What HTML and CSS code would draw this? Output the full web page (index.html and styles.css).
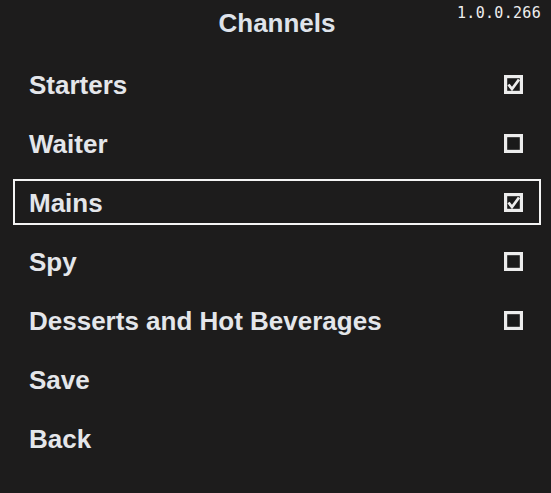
FILE: index.html
```html
<!DOCTYPE html>
<html lang="en">
<head>
    <meta charset="UTF-8">
    <title>Channels</title>
    <link rel="stylesheet" href="styles.css">
</head>
<body>
<div class="screen">
    <div class="header">
        <span></span>
        <h1>Channels</h1>
        <span class="version">1.0.0.266</span>
    </div>

    <!-- Channel list -->
    <div class="menu">
        <div class="item">
            <span>Starters</span>
            <svg class="check" viewBox="0 0 19 19"><rect x="1.6" y="1.6" width="15.8" height="15.8" /><path d="M4.5 9.5 L8 14 L15 4.5" /></svg>
        </div>
        <div class="item">
            <span>Waiter</span>
            <svg class="check" viewBox="0 0 19 19"><rect x="1.6" y="1.6" width="15.8" height="15.8" /></svg>
        </div>
        <div class="item selected">
            <span>Mains</span>
            <svg class="check" viewBox="0 0 19 19"><rect x="1.6" y="1.6" width="15.8" height="15.8" /><path d="M4.5 9.5 L8 14 L15 4.5" /></svg>
        </div>
        <div class="item">
            <span>Spy</span>
            <svg class="check" viewBox="0 0 19 19"><rect x="1.6" y="1.6" width="15.8" height="15.8" /></svg>
        </div>
        <div class="item">
            <span>Desserts and Hot Beverages</span>
            <svg class="check" viewBox="0 0 19 19"><rect x="1.6" y="1.6" width="15.8" height="15.8" /></svg>
        </div>
        <div class="item">
            <span>Save</span>
        </div>
        <div class="item">
            <span>Back</span>
        </div>
    </div>
</div>
</body>
</html>
```
FILE: styles.css
```css
body {
    font-family: "Liberation Sans", Arial, sans-serif;
    background-color: #1d1c1c;
    color: #e4e6ea;
    margin: 0;
    padding: 0;
}

.screen {
    width: 551px;
    height: 493px;
    padding: 0 10px 0 13px;
    box-sizing: border-box;
}

.header {
    display: grid;
    grid-template-columns: 1fr auto 1fr;
    height: 61px;
}

.header h1 {
    margin: 0;
    padding-top: 8px;
    font-size: 26px;
    line-height: 30px;
    font-weight: bold;
    color: #dfe3ea;
}

.version {
    justify-self: end;
    padding-top: 4px;
    font-family: "DejaVu Sans Mono", "Liberation Mono", monospace;
    font-size: 15px;
    line-height: 18px;
    color: #eeeeee;
    letter-spacing: 0.3px;
}

.menu {
    display: flex;
    flex-direction: column;
    gap: 13px;
}

.item {
    display: flex;
    align-items: center;
    justify-content: space-between;
    height: 46px;
    box-sizing: border-box;
    padding: 1px 16px 0 14px;
    border: 2px solid transparent;
    font-size: 26px;
    font-weight: bold;
    line-height: 42px;
}

.item.selected {
    border-color: #f4f4f4;
}

.check {
    width: 19px;
    height: 19px;
}

.check rect {
    fill: #1a1a1a;
    stroke: #ececec;
    stroke-width: 3.2;
}

.check path {
    fill: none;
    stroke: #ececec;
    stroke-width: 2.8;
}
```
